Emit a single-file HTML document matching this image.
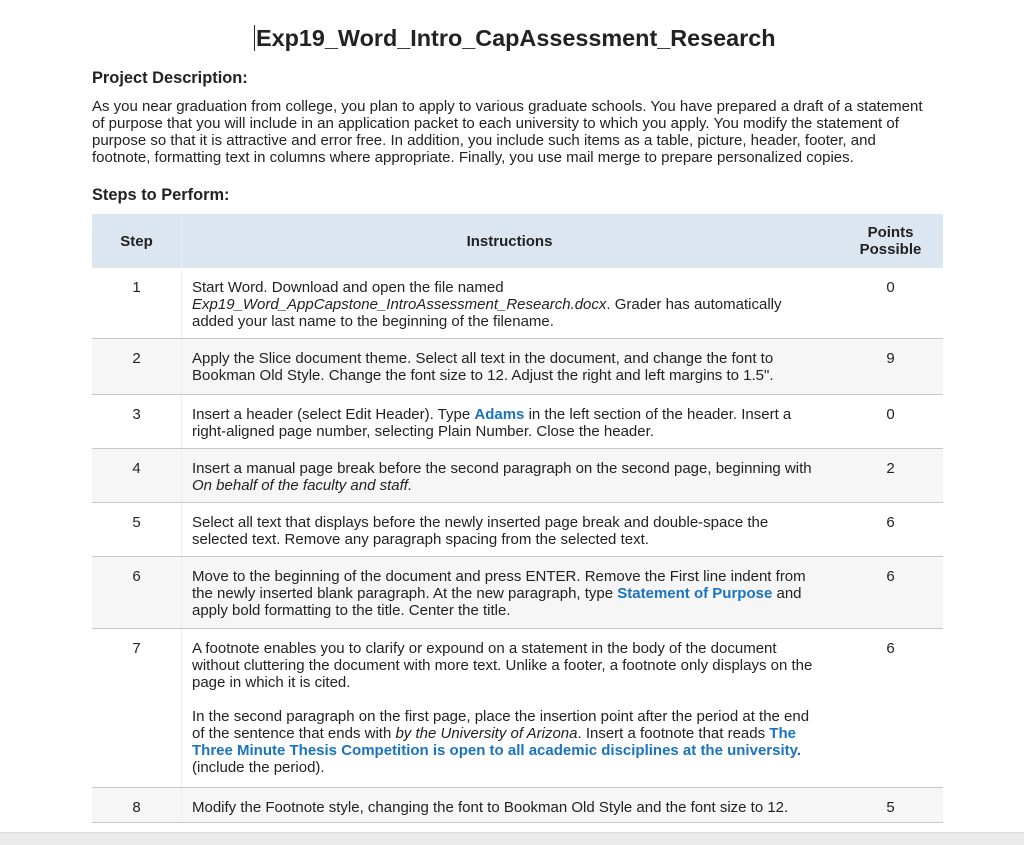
<!DOCTYPE html>
<html><head><meta charset="utf-8"><style>
body{margin:0;width:1024px;height:844px;background:#fff;font-family:"Liberation Sans",Arial,sans-serif;color:#222;position:relative;overflow:hidden}
.a{position:absolute}
.t{font-size:15px;line-height:17px}
.row{position:absolute;left:92px;width:851px;border-top:1px solid #c8c8c8}
.g{background:#f6f6f6}
.n{position:absolute;left:0;width:89px;text-align:center;top:11px}
.i{position:absolute;left:100px;width:626px;top:11px}
.p{position:absolute;left:746px;width:105px;text-align:center;top:11px}
.vl{position:absolute;left:89px;top:0;bottom:0;border-left:1px solid #eee}
b.bl{color:#1a73c0}
</style></head><body>
<div class="a" style="left:0;top:832px;width:1024px;height:12px;background:#ebebeb;border-top:1px solid #ddd"></div>
<div class="a" style="left:254px;top:25px;font-size:23.4px;font-weight:bold;color:#222"><span style="border-left:1px solid #222;margin-right:1px"></span>Exp19_Word_Intro_CapAssessment_Research</div>
<div class="a" style="left:92px;top:69px;font-size:16.4px;font-weight:bold">Project Description:</div>
<div class="a t" style="left:92px;top:98px;width:845px">As you near graduation from college, you plan to apply to various graduate schools. You have prepared a draft of a statement of purpose that you will include in an application packet to each university to which you apply. You modify the statement of purpose so that it is attractive and error free. In addition, you include such items as a table, picture, header, footer, and footnote, formatting text in columns where appropriate. Finally, you use mail merge to prepare personalized copies.</div>
<div class="a" style="left:92px;top:186px;font-size:16.4px;font-weight:bold">Steps to Perform:</div>
<div class="a t" style="left:92px;top:214px;width:851px;height:54px;background:#dce6f1;font-weight:bold">
<div class="a" style="left:0;width:89px;text-align:center;top:19px">Step</div>
<div class="a" style="left:89px;width:657px;text-align:center;top:19px">Instructions</div>
<div class="a" style="left:746px;width:105px;text-align:center;top:10px">Points<br>Possible</div>
<div class="vl" style="border-color:#e8eef6"></div>
</div>
<div class="row t" style="top:268px;height:70px;border-top:none"><div class="vl"></div><div class="n">1</div><div class="i">Start Word. Download and open the file named <i>Exp19_Word_AppCapstone_IntroAssessment_Research.docx</i>. Grader has automatically added your last name to the beginning of the filename.</div><div class="p">0</div></div>
<div class="row t g" style="top:338px;height:55px"><div class="vl"></div><div class="n">2</div><div class="i">Apply the Slice document theme. Select all text in the document, and change the font to Bookman Old Style. Change the font size to 12. Adjust the right and left margins to 1.5".</div><div class="p">9</div></div>
<div class="row t" style="top:394px;height:53px"><div class="vl"></div><div class="n">3</div><div class="i">Insert a header (select Edit Header). Type <b class="bl">Adams</b> in the left section of the header. Insert a right-aligned page number, selecting Plain Number. Close the header.</div><div class="p">0</div></div>
<div class="row t g" style="top:448px;height:53px"><div class="vl"></div><div class="n">4</div><div class="i">Insert a manual page break before the second paragraph on the second page, beginning with <i>On behalf of the faculty and staff.</i></div><div class="p">2</div></div>
<div class="row t" style="top:502px;height:53px"><div class="vl"></div><div class="n">5</div><div class="i">Select all text that displays before the newly inserted page break and double-space the selected text. Remove any paragraph spacing from the selected text.</div><div class="p">6</div></div>
<div class="row t g" style="top:556px;height:71px"><div class="vl"></div><div class="n">6</div><div class="i">Move to the beginning of the document and press ENTER. Remove the First line indent from the newly inserted blank paragraph. At the new paragraph, type <b class="bl">Statement of Purpose</b> and apply bold formatting to the title. Center the title.</div><div class="p">6</div></div>
<div class="row t" style="top:628px;height:158px"><div class="vl"></div><div class="n">7</div><div class="i">A footnote enables you to clarify or expound on a statement in the body of the document without cluttering the document with more text. Unlike a footer, a footnote only displays on the page in which it is cited.<br><br>In the second paragraph on the first page, place the insertion point after the period at the end of the sentence that ends with <i>by the University of Arizona</i>. Insert a footnote that reads <b class="bl">The Three Minute Thesis Competition is open to all academic disciplines at the university.</b> (include the period).</div><div class="p">6</div></div>
<div class="row t g" style="top:787px;height:34px;border-bottom:1px solid #c8c8c8"><div class="vl"></div><div class="n">8</div><div class="i">Modify the Footnote style, changing the font to Bookman Old Style and the font size to 12.</div><div class="p">5</div></div>
</body></html>
